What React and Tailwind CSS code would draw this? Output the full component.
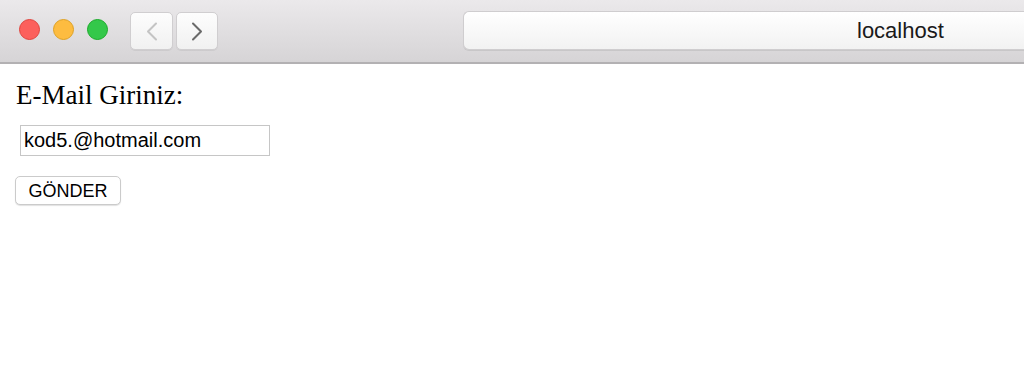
const ChevronLeft = ({ className }) => (
  <svg viewBox="0 0 12 20" className={className} fill="none" stroke="currentColor" strokeWidth="2" strokeLinecap="round" strokeLinejoin="round">
    <path d="M10 2 L2 10 L10 18" />
  </svg>
);

const ChevronRight = ({ className }) => (
  <svg viewBox="0 0 12 20" className={className} fill="none" stroke="currentColor" strokeWidth="2" strokeLinecap="round" strokeLinejoin="round">
    <path d="M2 2 L10 10 L2 18" />
  </svg>
);

const TitleBar = () => (
  <div className="h-[64px] bg-gradient-to-b from-[#ebe9eb] to-[#d6d4d6] border-b-2 border-[#b3b1b3] flex items-start">
    {/* traffic lights */}
    <div className="flex gap-[13px] pl-[19px] pt-[19px]">
      <span className="w-[21px] h-[21px] rounded-full bg-[#fc605c] border border-[#e0443e]" />
      <span className="w-[21px] h-[21px] rounded-full bg-[#fdbc40] border border-[#dea123]" />
      <span className="w-[21px] h-[21px] rounded-full bg-[#34c84a] border border-[#1aab29]" />
    </div>
    {/* nav buttons */}
    <div className="flex gap-[3px] ml-[22px] mt-[12px]">
      <button className="w-[43px] h-[38px] rounded-[5px] bg-gradient-to-b from-[#fdfdfd] to-[#f1f1f1] border border-[#d0ced0] shadow-[0_1px_0_rgba(0,0,0,0.06)] flex items-center justify-center text-[#c4c4c4]">
        <ChevronLeft className="w-[12px] h-[21px]" />
      </button>
      <button className="w-[42px] h-[38px] rounded-[5px] bg-gradient-to-b from-[#fdfdfd] to-[#f1f1f1] border border-[#d0ced0] shadow-[0_1px_0_rgba(0,0,0,0.06)] flex items-center justify-center text-[#6a6a6a]">
        <ChevronRight className="w-[12px] h-[21px]" />
      </button>
    </div>
    {/* address bar */}
    <div className="ml-[245px] mt-[11px] flex-1 h-[39px] rounded-l-[6px] bg-gradient-to-b from-[#ffffff] to-[#f2f2f2] border border-r-0 border-[#cfcdcf] shadow-[0_1px_0_rgba(0,0,0,0.08)] flex items-center pl-[393px]">
      <span className="text-[22px] text-[#1a1a1a] font-['Liberation_Sans',Arial,sans-serif] leading-none">localhost</span>
    </div>
  </div>
);

export default function App() {
  return (
    <div className="w-[1024px] h-[378px] bg-white overflow-hidden">
      <TitleBar />
      <div className="pl-[16px]">
        <h3 className="mt-[18px] text-[27px] leading-none text-black font-['Liberation_Serif','Times_New_Roman',serif]">
          E-Mail Giriniz:
        </h3>
        <input
          type="text"
          defaultValue="kod5.@hotmail.com"
          className="block mt-[16px] ml-[4px] w-[250px] h-[31px] border border-[#c6c6c6] px-[3px] text-[20px] text-black font-['Liberation_Sans',Arial,sans-serif] outline-none"
        />
        <button className="block mt-[20px] -ml-[1px] w-[106px] h-[29px] rounded-[5px] border border-[#cbcbcb] bg-white shadow-[0_1px_1px_rgba(0,0,0,0.12)] text-[18px] leading-none text-black font-['Liberation_Sans',Arial,sans-serif]">
          GÖNDER
        </button>
      </div>
    </div>
  );
}
